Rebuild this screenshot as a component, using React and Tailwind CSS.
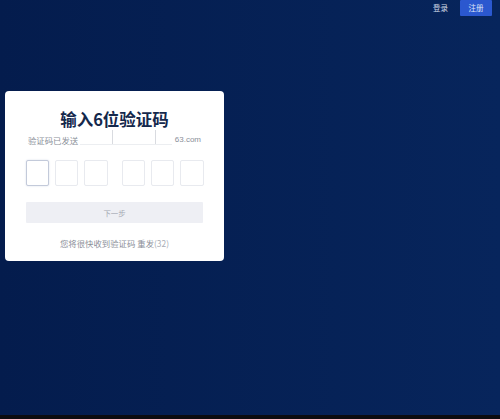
export default function App() {
  const Box = ({ active, wide }) => (
    <div className={`${wide ? "w-[24px]" : "w-[23px]"} h-[26px] rounded-[2px] bg-white border ${active ? "border-[#c3cada] shadow-[0_0_2px_#d5dbe8]" : "border-[#e8eaef]"}`} />
  );
  return (
    <div className="w-[500px] h-[419px] overflow-hidden flex flex-col bg-[#0c0c10] font-['Noto_Sans_CJK_SC','Liberation_Sans',sans-serif]">
      <div className="w-full h-[415px] shrink-0 flex flex-col bg-gradient-to-r from-[#041c4d] to-[#07255c]">
        <header className="h-[16px] flex items-center justify-end pr-[8px]">
          <span className="text-[7.5px] leading-none text-[#d5dce8] mr-[12px]">登录</span>
          <span className="w-[32px] h-[16px] flex items-center justify-center rounded-[1px] bg-[#2b58cf] text-[7.5px] leading-none text-[#dfe6f7]">注册</span>
        </header>
        <div className="ml-[5px] mt-[75px] w-[219px] h-[170px] rounded-[4px] bg-white flex flex-col px-[21px]">
          <h1 className="mt-[16px] text-center text-[16.5px] leading-[24px] font-bold text-[#14284c]">输入6位验证码</h1>
          <div className="relative mt-[2px] h-[14px] flex items-center justify-between px-[2px] text-[8.4px] leading-none text-[#8a8f99]">
            <span>验证码已发送</span>
            <span className="font-['Liberation_Sans',sans-serif] text-[8px]">63.com</span>
            <div className="absolute left-[86px] top-[-3px] w-px h-[14px] bg-[#d9dbe0]" />
            <div className="absolute left-[129px] top-[-3px] w-px h-[14px] bg-[#d9dbe0]" />
            <div className="absolute left-[54px] top-[11px] w-[92px] h-px bg-[#eceef1]" />
          </div>
          <div className="mt-[13px] flex">
            <div className="flex gap-[6px]"><Box active /><Box /><Box wide /></div>
            <div className="flex gap-[6px] ml-[14px]"><Box /><Box /><Box wide /></div>
          </div>
          <button className="mt-[16px] w-[177px] h-[21px] bg-[#eeeff4] rounded-[1px] text-[7.4px] text-[#a3a7b2] flex items-center justify-center">下一步</button>
          <p className="mt-[14px] text-center text-[8.4px] leading-[12px] text-[#8b8f99]">您将很快收到验证码 重发<span className="text-[#a9adb6]">(32)</span></p>
        </div>
      </div>
    </div>
  );
}
